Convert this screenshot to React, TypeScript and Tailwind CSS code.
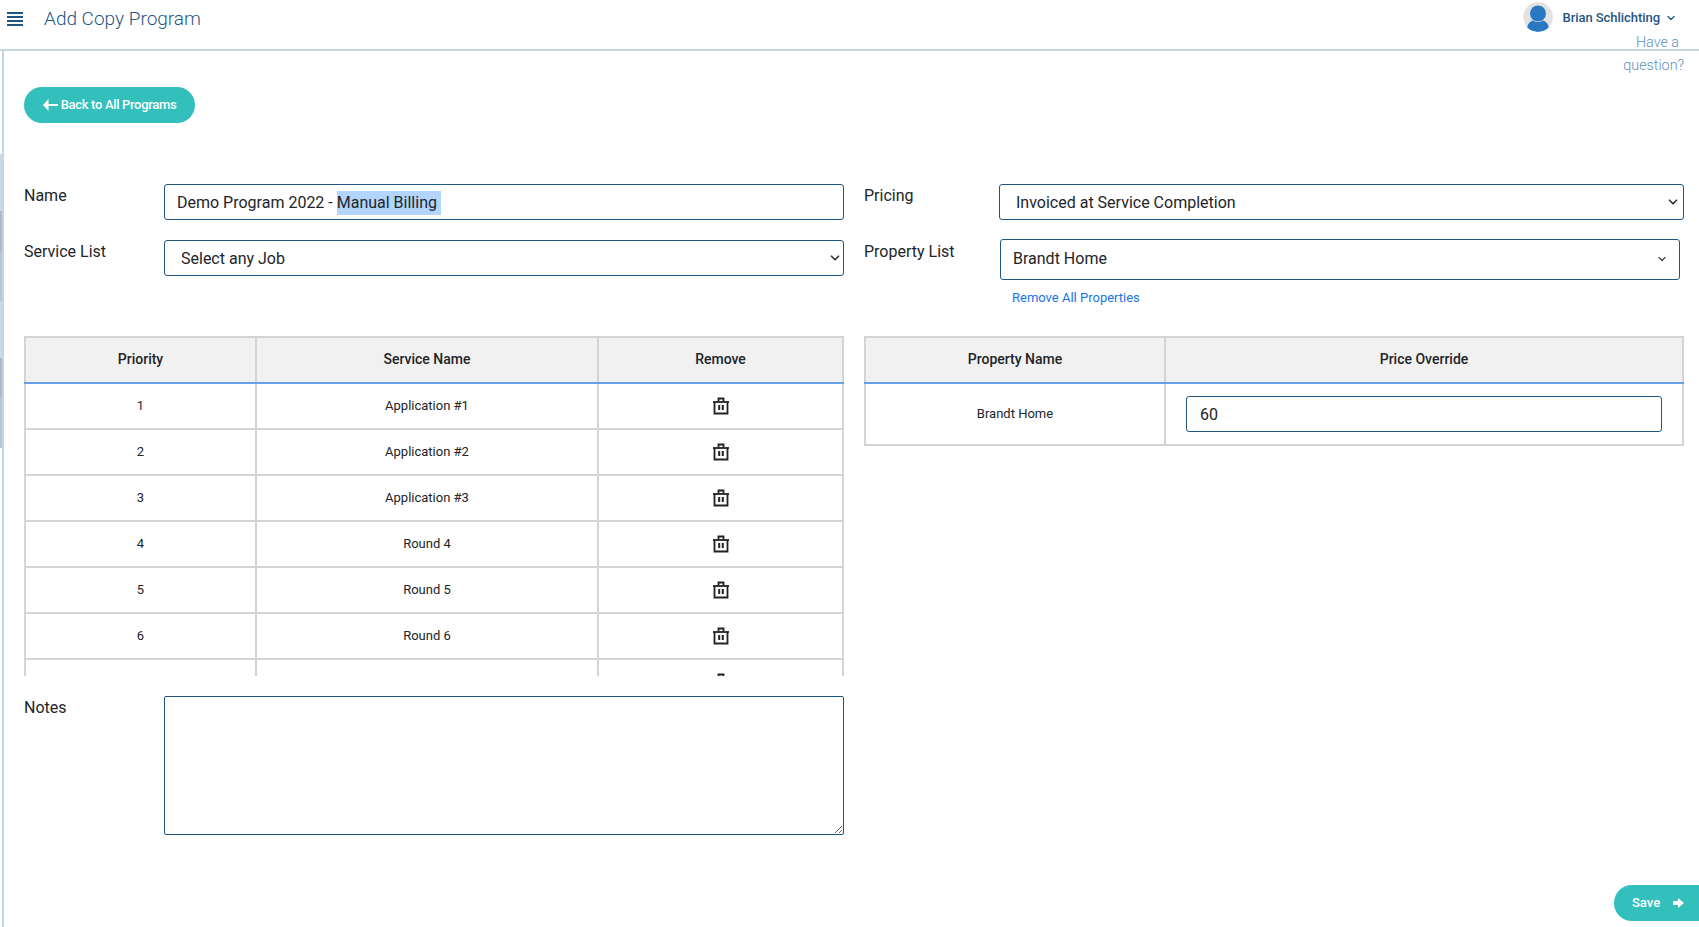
import { ChevronDown } from 'lucide-react';

const services = ['Application #1', 'Application #2', 'Application #3', 'Round 4', 'Round 5', 'Round 6', ''];

const TrashIcon = () => (
  <svg width="18" height="18" viewBox="0 0 18 18" fill="none" stroke="#222" className="mx-auto block">
    <path d="M1 5h16" strokeWidth="1.8" />
    <path d="M2.500 5v11.500h13V5" strokeWidth="1.8" />
    <path d="M6.500 4.500V1.500h5v3" strokeWidth="1.8" />
    <path d="M7.200 8v5M10.800 8v5" strokeWidth="2" />
  </svg>
);

const Rail = () => (
  <div className="flex w-[4px] shrink-0 flex-col border-r-2 border-[#c5d5e3]">
    <div className="h-[103px]" />
    <div className="h-[57px] bg-[#c8dbe9]" />
    <div className="h-[40px] bg-[#aebbc6]" />
    <div className="h-[50px] bg-[#b6c6d4]" />
    <div className="h-[57px] bg-[#c8dbe9]" />
    <div className="h-[40px] bg-[#aebbc6]" />
    <div className="h-[50px] bg-[#b6c6d4]" />
  </div>
);

const App = () => {
  return (
    <div className="relative flex h-[927px] flex-col overflow-hidden bg-white font-['Roboto',sans-serif] text-[#212529]">
      <header className="flex h-[51px] shrink-0 items-start border-b-2 border-[#c5d5e3]">
        <div className="mt-[12px] ml-[7px] flex h-[14px] w-[16px] flex-col justify-between">
          <span className="h-[2px] bg-[#1f5582]" />
          <span className="h-[2px] bg-[#1f5582]" />
          <span className="h-[2px] bg-[#1f5582]" />
          <span className="h-[2px] bg-[#1f5582]" />
        </div>
        <h1 className="mt-[5px] ml-[21px] text-[19px] leading-[28px] font-light text-[#1f5582]">Add Copy Program</h1>
        <div className="mt-[2px] mr-[22px] ml-auto flex items-center">
          <svg width="30" height="30" viewBox="0 0 30 30" className="rounded-full">
            <circle cx="15" cy="15" r="15" fill="#e2e2e2" />
            <circle cx="15" cy="11.500" r="8" fill="#2b78c2" />
            <path d="M4 26c1-5 4-7 6-7.500 3 2 7 2 10 0 2 .5 5 2.500 6 7.500-3 3-7 4-11 4s-8-1-11-4z" fill="#2b78c2" />
          </svg>
          <span className="mt-[1px] ml-[9px] text-[13px] font-medium tracking-[-0.05px] text-[#1f5582]">Brian Schlichting</span>
          <ChevronDown size={12} strokeWidth={2.5} className="mt-[1px] ml-[5px] text-[#1f5582]" />
        </div>
      </header>

      {/* help link sits over the header line */}
      <div className="absolute top-[31px] right-[15px] w-[70px] text-right text-[14.3px] leading-[23px] font-light text-[#5f8fc0]">
        <div className="pr-[5px]">Have a</div>
        <div>question?</div>
      </div>

      <div className="flex flex-1">
        <Rail />
        <main className="flex flex-1 flex-col pt-[36px] pr-[15px] pl-[20px]">
          <button className="flex h-[36px] w-[171px] items-center justify-center rounded-full bg-[#33c0bd] text-[13px] font-medium tracking-[-0.33px] text-white">
            <svg width="15" height="12" viewBox="0 0 15 12" className="mr-[3px]" fill="white">
              <path d="M5.500 0 0 6l5.500 6V7H15V5H5.500z" />
            </svg>
            Back to All Programs
          </button>

          <div className="mt-[61px] grid grid-cols-[820px_820px] gap-x-[20px]">
            <div>
              <div className="flex">
                <label className="w-[140px] text-[16px] leading-[24px]">Name</label>
                <div className="flex h-[36px] w-[680px] items-center rounded-[3px] border border-[#1f5582] pt-[2px] pl-[12px] text-[16px]">
                  Demo Program 2022 -&nbsp;<span className="bg-[#b3d4fc]">Manual Billing&nbsp;</span>
                </div>
              </div>
              <div className="mt-[20px] flex">
                <label className="w-[140px] text-[16px] leading-[24px]">Service List</label>
                <div className="flex h-[36px] w-[680px] items-center justify-between rounded-[3px] border border-[#1f5582] pr-[1px] pl-[16px] text-[16px]">
                  <span className="pt-[2px]">Select any Job</span>
                  <ChevronDown size={14} strokeWidth={3} className="text-[#333]" />
                </div>
              </div>
            </div>
            <div>
              <div className="flex">
                <label className="w-[135px] text-[16px] leading-[24px]">Pricing</label>
                <div className="flex h-[36px] w-[685px] items-center justify-between rounded-[3px] border border-[#1f5582] pr-[3px] pl-[16px] text-[16px]">
                  <span className="pt-[2px]">Invoiced at Service Completion</span>
                  <ChevronDown size={14} strokeWidth={3} className="text-[#333]" />
                </div>
              </div>
              <div className="mt-[19px] flex">
                <label className="w-[136px] pt-[1px] text-[16px] leading-[24px]">Property List</label>
                <div className="w-[680px]">
                  <div className="flex h-[41px] items-center justify-between rounded-[3px] border border-[#1f5582] pr-[11px] pb-[2px] pl-[12px] text-[16px]">
                    Brandt Home
                    <ChevronDown size={12} strokeWidth={2.5} className="text-[#444]" />
                  </div>
                  <a className="mt-[9px] ml-[12px] block text-[13px] leading-[18px] text-[#1a73e8]">Remove All Properties</a>
                </div>
              </div>
            </div>
          </div>

          <div className="mt-[29px] grid grid-cols-[820px_820px] gap-x-[20px]">
            <div>
              <div className="h-[340px] overflow-hidden">
                <table className="w-full table-fixed border-collapse border-2 border-[#d4d4d4] text-center text-[13px]">
                  <thead>
                    <tr className="h-[46px] bg-[#f1f1f1] text-[14px]">
                      <th className="w-[231px] border-2 border-b-[#6aa0ea] border-[#d4d4d4] pb-[2px] font-medium">Priority</th>
                      <th className="w-[342px] border-2 border-b-[#6aa0ea] border-[#d4d4d4] pb-[2px] font-medium">Service Name</th>
                      <th className="border-2 border-b-[#6aa0ea] border-[#d4d4d4] pb-[2px] font-medium">Remove</th>
                    </tr>
                  </thead>
                  <tbody>
                    {services.map((name, i) => (
                      <tr key={i} className="h-[46px]">
                        <td className="border-2 border-[#d4d4d4]">{name ? i + 1 : ''}</td>
                        <td className="border-2 border-[#d4d4d4]">{name}</td>
                        <td className="border-2 border-[#d4d4d4]"><TrashIcon /></td>
                      </tr>
                    ))}
                  </tbody>
                </table>
              </div>
              <div className="mt-[20px] flex">
                <label className="w-[140px] text-[16px] leading-[24px]">Notes</label>
                <textarea readOnly className="h-[139px] w-[680px] rounded-[2px] border border-[#1f5582] outline-none" />
              </div>
            </div>
            <div>
              <table className="w-full table-fixed border-collapse border-2 border-[#d4d4d4] text-center text-[13px]">
                <thead>
                  <tr className="h-[46px] bg-[#f1f1f1] text-[14px]">
                    <th className="w-[300px] border-2 border-b-[#6aa0ea] border-[#d4d4d4] pb-[2px] font-medium">Property Name</th>
                    <th className="border-2 border-b-[#6aa0ea] border-[#d4d4d4] pb-[2px] font-medium">Price Override</th>
                  </tr>
                </thead>
                <tbody>
                  <tr className="h-[62px]">
                    <td className="border-2 border-[#d4d4d4]">Brandt Home</td>
                    <td className="border-2 border-[#d4d4d4] px-[20px]">
                      <div className="flex h-[36px] items-center rounded-[3px] border border-[#1f5582] pt-[2px] pl-[13px] text-left text-[16px]">60</div>
                    </td>
                  </tr>
                </tbody>
              </table>
            </div>
          </div>

          <div className="mt-[50px] flex justify-end">
            <button className="-mr-[15px] flex h-[36px] w-[85px] items-center rounded-l-full bg-[#33c0bd] pl-[18px] text-[13px] font-medium text-white">
              Save
              <svg width="11" height="10" viewBox="0 0 11 10" className="ml-[13px]" fill="white">
                <path d="M0 3h5V0l6 5-6 5V7H0z" />
              </svg>
            </button>
          </div>
        </main>
      </div>
    </div>
  );
};

export default App;
